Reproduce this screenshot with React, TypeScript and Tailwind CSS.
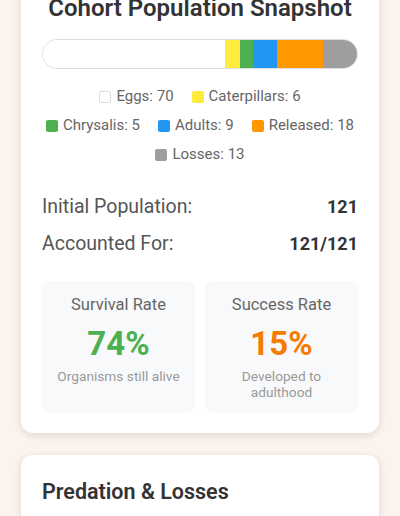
import React from "react";

type Seg = { label: string; value: number; color: string; border?: boolean };

const segments: Seg[] = [
  { label: "Eggs", value: 70, color: "#ffffff", border: true },
  { label: "Caterpillars", value: 6, color: "#ffeb3b" },
  { label: "Chrysalis", value: 5, color: "#4caf50" },
  { label: "Adults", value: 9, color: "#2196f3" },
  { label: "Released", value: 18, color: "#ff9800" },
  { label: "Losses", value: 13, color: "#9e9e9e" },
];

const legendRows: Seg[][] = [segments.slice(0, 2), segments.slice(2, 5), segments.slice(5)];

const total = 121;

function LegendItem({ s }: { s: Seg }) {
  return (
    <div className="flex items-center gap-[5px] text-[15px] leading-[21px] text-[#666]">
      <span
        className={`inline-block h-[12px] w-[12px] rounded-[2px] ${s.border ? "border border-[#dddddd]" : ""}`}
        style={{ backgroundColor: s.color }}
      />
      <span>
        {s.label}: {s.value}
      </span>
    </div>
  );
}

export default function App() {
  return (
    <div
      className="min-h-[516px] w-[400px] overflow-hidden bg-[#fdf3ee] px-[21px]"
      style={{ fontFamily: "Roboto, 'Noto Sans', Arial, sans-serif" }}
    >
      <div className="-mt-[40px]">
        <div className="rounded-xl bg-white px-[21px] pt-[32px] pb-[20px] shadow-[0_2px_8px_rgba(0,0,0,0.12)]">
          <h2 className="text-center text-[24px] font-semibold leading-[32px] text-[#333]">
            Cohort Population Snapshot
          </h2>
          <div className="mt-[15px] flex h-[30px] w-full overflow-hidden rounded-full border border-[#dddddd]">
            {segments.map((s) => (
              <div
                key={s.label}
                className="h-full"
                style={{ width: `${(s.value / total) * 100}%`, backgroundColor: s.color }}
              />
            ))}
          </div>
          <div className="mt-[17px] flex flex-col items-center gap-y-[8px]">
            {legendRows.map((row, i) => (
              <div key={i} className="flex justify-center gap-x-[18px]">
                {row.map((s) => (
                  <LegendItem key={s.label} s={s} />
                ))}
              </div>
            ))}
          </div>
          <div className="mt-[28px] flex items-center justify-between leading-[27px]">
            <span className="text-[19.5px] text-[#555]">Initial Population:</span>
            <span className="text-[18px] font-bold text-[#333]">121</span>
          </div>
          <div className="mt-[10px] flex items-center justify-between leading-[27px]">
            <span className="text-[19.5px] text-[#555]">Accounted For:</span>
            <span className="text-[18px] font-bold text-[#333]">121/121</span>
          </div>
          <div className="mt-[24px] grid grid-cols-2 gap-[10px]">
            <div className="rounded-lg bg-[#f8f9fa] px-[10px] pt-[12px] pb-[13px] text-center">
              <div className="text-[16.5px] leading-[24px] text-[#666]">Survival Rate</div>
              <div className="mt-[8px] text-[33px] font-bold leading-[38px] text-[#4caf50]">74%</div>
              <div className="mt-[5px] text-[13.7px] leading-[16px] text-[#999]">Organisms still alive</div>
            </div>
            <div className="rounded-lg bg-[#f8f9fa] px-[10px] pt-[12px] pb-[13px] text-center">
              <div className="text-[16.5px] leading-[24px] text-[#666]">Success Rate</div>
              <div className="mt-[8px] text-[33px] font-bold leading-[38px] text-[#f57c00]">15%</div>
              <div className="mx-auto mt-[5px] max-w-[115px] text-[13.7px] leading-[16px] text-[#999]">
                Developed to adulthood
              </div>
            </div>
          </div>
        </div>
        <div className="mt-[22px] rounded-xl bg-white px-[21px] pt-[23px] pb-[20px] shadow-[0_2px_8px_rgba(0,0,0,0.12)]">
          <h3 className="text-[21.5px] font-semibold leading-[28px] text-[#333]">Predation &amp; Losses</h3>
          <div className="h-[60px]" />
        </div>
      </div>
    </div>
  );
}
